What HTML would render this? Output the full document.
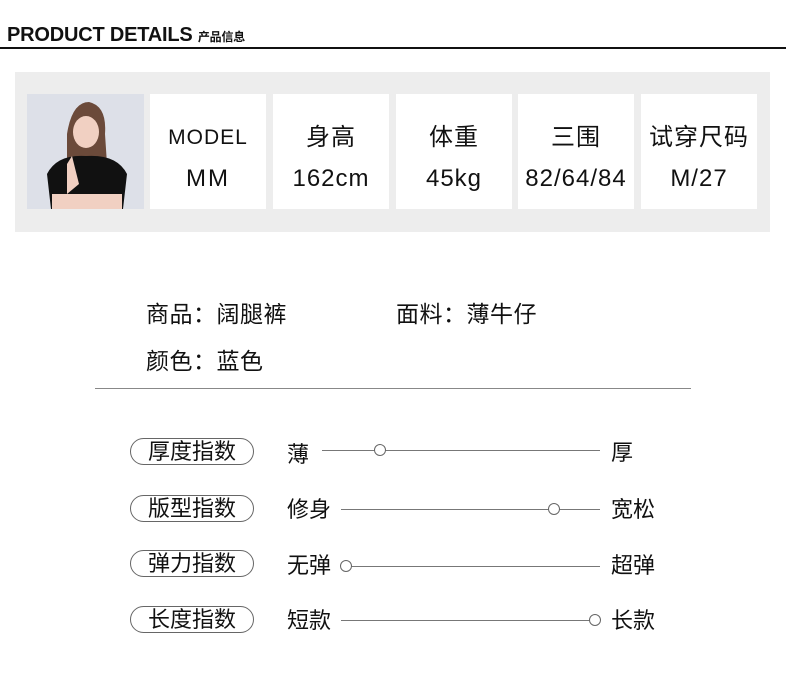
<!DOCTYPE html>
<html><head><meta charset="utf-8"><style>
body{margin:0;width:790px;height:682px;background:#fff;position:relative;overflow:hidden;font-family:"Liberation Sans","Noto Sans CJK SC",sans-serif;color:#111}
.a{position:absolute}
.cell{position:absolute;top:94px;width:116px;height:115px;background:#fff;text-align:center;font-size:24px;line-height:41px;padding-top:23px;box-sizing:border-box;letter-spacing:1px}
.pill{position:absolute;left:130px;width:124px;height:27px;border:1px solid #666;border-radius:14px;box-sizing:border-box;text-align:center;font-size:22px;line-height:25px}
.t{position:absolute;font-size:22px;line-height:26px}
.i{position:absolute;font-size:23px;line-height:26px;letter-spacing:0.5px}
.ln{position:absolute;height:1px;background:#777}
.c{position:absolute;width:12px;height:12px;border:1px solid #666;border-radius:50%;background:#fff;box-sizing:border-box}
</style></head><body>
<div class="a" style="left:7px;top:24px;font-size:20px;font-weight:bold;letter-spacing:-0.2px">PRODUCT DETAILS <span style="font-size:12px">产品信息</span></div>
<div class="a" style="left:0;top:47px;width:786px;height:2px;background:#111"></div>
<div class="a" style="left:15px;top:72px;width:755px;height:160px;background:#ededed"></div>
<div class="a" style="left:27px;top:94px;width:117px;height:115px;background:#dde0e8;overflow:hidden">
<svg width="117" height="115"><path d="M40 40 Q45 8 62 8 Q80 12 78 40 L80 70 L40 70Z" fill="#6b4a3a"/><ellipse cx="59" cy="38" rx="13" ry="16" fill="#f1d0c2"/><path d="M20 80 Q30 60 59 62 Q90 60 100 80 L96 115 L24 115Z" fill="#111"/><path d="M45 62 L52 90 L40 100 L40 70Z" fill="#f1d0c2"/><rect x="25" y="100" width="70" height="15" fill="#f1d0c2"/></svg></div>
<div class="cell" style="left:150px;font-size:21px">MODEL<br><span style="font-size:24px;letter-spacing:2px">MM</span></div>
<div class="cell" style="left:273px">身高<br>162cm</div>
<div class="cell" style="left:396px">体重<br>45kg</div>
<div class="cell" style="left:518px">三围<br>82/64/84</div>
<div class="cell" style="left:641px">试穿尺码<br>M/27</div>
<div class="i" style="left:146px;top:301px">商品：阔腿裤</div>
<div class="i" style="left:396px;top:301px">面料：薄牛仔</div>
<div class="i" style="left:146px;top:348px">颜色：蓝色</div>
<div class="a" style="left:95px;top:388px;width:596px;height:1px;background:#888"></div>

<div class="pill" style="top:438px">厚度指数</div>
<div class="t" style="left:287px;top:442px">薄</div>
<div class="ln" style="left:322px;top:450px;width:278px"></div><div class="c" style="left:374px;top:444px"></div>
<div class="t" style="left:611px;top:440px">厚</div>

<div class="pill" style="top:495px">版型指数</div>
<div class="t" style="left:287px;top:497px">修身</div>
<div class="ln" style="left:341px;top:509px;width:259px"></div><div class="c" style="left:548px;top:503px"></div>
<div class="t" style="left:611px;top:497px">宽松</div>

<div class="pill" style="top:550px">弹力指数</div>
<div class="t" style="left:287px;top:553px">无弹</div>
<div class="ln" style="left:346px;top:566px;width:254px"></div><div class="c" style="left:340px;top:560px"></div>
<div class="t" style="left:611px;top:553px">超弹</div>

<div class="pill" style="top:606px">长度指数</div>
<div class="t" style="left:287px;top:608px">短款</div>
<div class="ln" style="left:341px;top:620px;width:254px"></div><div class="c" style="left:589px;top:614px"></div>
<div class="t" style="left:611px;top:608px">长款</div>
</body></html>
